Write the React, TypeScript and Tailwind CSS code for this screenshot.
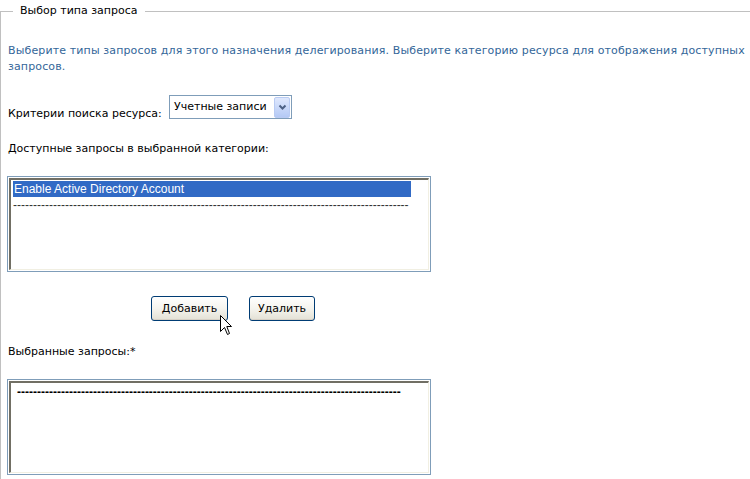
import React from 'react';

function ListBox({ children }: { children: React.ReactNode }) {
  return (
    <div className="-ml-px w-[424px] border border-[#7f9db9] bg-white p-px">
      <div className="h-[92px] overflow-hidden border-t-2 border-l-2 border-t-[#716f64] border-l-[#716f64] border-b border-r border-b-[#f1efe2] border-r-[#f1efe2] bg-white px-[2px] pt-[1px]">
        {children}
      </div>
    </div>
  );
}

function XpButton({ label, width }: { label: string; width: string }) {
  return (
    <button
      type="button"
      className={`${width} h-[25px] rounded-[3px] border border-[#003c74] bg-gradient-to-b from-white via-[#f5f4ee] to-[#e3e1d5] text-[11px] text-black shadow-[inset_0_-1px_0_#d6d0c5]`}
    >
      {label}
    </button>
  );
}

function Cursor() {
  return (
    <svg width="13" height="21" viewBox="0 0 13 21" className="absolute left-[69px] top-[19px]">
      <path
        d="M0.5 0.5 L0.5 16.5 L4.5 12.5 L7.5 19.5 L9.5 18.5 L6.8 11.5 L11.5 11.5 Z"
        fill="white"
        stroke="black"
        strokeWidth="1"
      />
    </svg>
  );
}

export default function App() {
  return (
    <div className="min-h-[479px] bg-white font-['DejaVu_Sans',sans-serif] text-[11px] leading-4 text-black">
      <fieldset className="m-0 border-0 border-t border-l border-[#c0c0c0] pl-[7px] pb-4">
        <legend className="ml-[5px] px-[7px] leading-[22px]">Выбор типа запроса</legend>

        <div className="mt-[21px] whitespace-nowrap tracking-[0.13px] text-[#336699]">
          <div>
            Выберите типы запросов для этого назначения делегирования. Выберите категорию ресурса для отображения доступных
          </div>
          <div>запросов.</div>
        </div>

        <div className="mt-[20px] flex items-start">
          <div className="mt-[11px] w-[161px]">Критерии поиска ресурса:</div>
          <div className="flex h-[24px] w-[123px] items-center border border-[#7f9db9] bg-white pl-[4px] pr-px">
            <span className="flex-1">Учетные записи</span>
            <span className="flex h-[21px] w-[16px] items-center justify-center rounded-[2px] border border-[#b9cbf3] bg-gradient-to-b from-[#dfe8fd] to-[#b4c9f5]">
              <svg width="9" height="7" viewBox="0 0 9 7">
                <polyline points="1.5,1.5 4.5,4.5 7.5,1.5" fill="none" stroke="#4d6185" strokeWidth="2" />
              </svg>
            </span>
          </div>
        </div>

        <div className="mt-[19px]">Доступные запросы в выбранной категории:</div>

        <div className="mt-[19px]">
          <ListBox>
            <div className="font-['Liberation_Sans',sans-serif] text-[12px] leading-4">
              <div className="w-[398px] bg-[#316ac5] pl-px text-white">Enable Active Directory Account</div>
              <div className="w-[398px] whitespace-nowrap text-[#333]">{'-'.repeat(99)}</div>
            </div>
          </ListBox>
        </div>

        <div className="mt-[24px] flex gap-[21px] pl-[143px]">
          <div className="relative">
            <XpButton label="Добавить" width="w-[77px]" />
            <Cursor />
          </div>
          <XpButton label="Удалить" width="w-[66px]" />
        </div>

        <div className="mt-[23px]">Выбранные запросы:*</div>

        <div className="mt-[19px]">
          <ListBox>
            <div className="pl-[4px] font-['Liberation_Sans',sans-serif] text-[12px] font-bold leading-4">
              <div className="w-[387px] whitespace-nowrap text-black">{'-'.repeat(96)}</div>
            </div>
          </ListBox>
        </div>
      </fieldset>
    </div>
  );
}
